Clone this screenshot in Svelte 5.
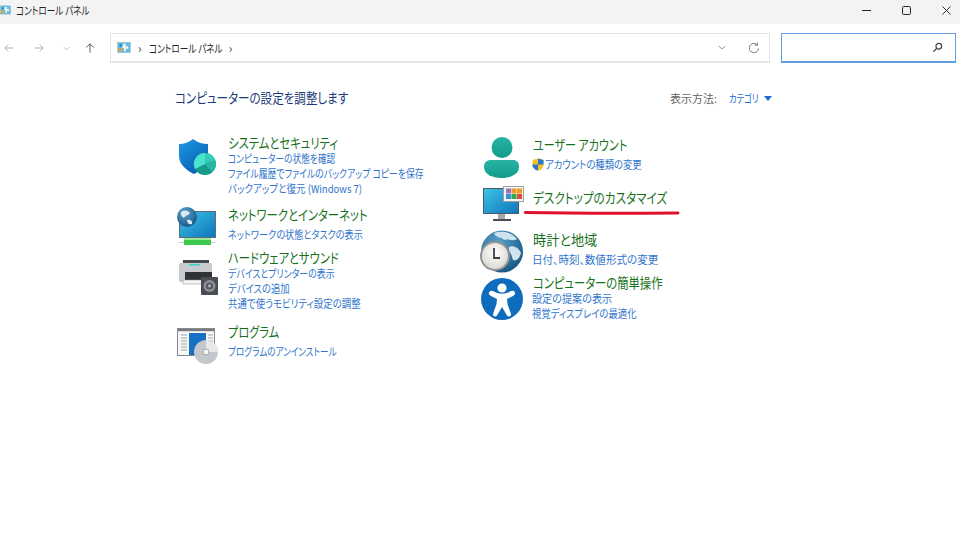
<script>
	// sx squeezes each line to the narrow kana widths of the original UI font
	const leftItems = [
		{
			icon: 'shield',
			iconY: 4,
			after: 11,
			title: 'システムとセキュリティ',
			sx: 0.81,
			links: [
				{ text: 'コンピューターの状態を確認', sx: 0.79 },
				{ text: 'ファイル履歴でファイルのバックアップ コピーを保存', sx: 0.805 },
				{ text: 'バックアップと復元 (Windows 7)', sx: 0.865 }
			]
		},
		{
			icon: 'network',
			iconY: -2,
			after: 8,
			title: 'ネットワークとインターネット',
			sx: 0.81,
			links: [{ text: 'ネットワークの状態とタスクの表示', sx: 0.83 }]
		},
		{
			icon: 'printer',
			iconY: 9,
			after: 13,
			title: 'ハードウェアとサウンド',
			sx: 0.81,
			links: [
				{ text: 'デバイスとプリンターの表示', sx: 0.81 },
				{ text: 'デバイスの追加', sx: 0.85 },
				{ text: '共通で使うモビリティ設定の調整', sx: 0.86 }
			]
		},
		{
			icon: 'program',
			iconY: 2,
			after: 0,
			title: 'プログラム',
			sx: 0.8,
			links: [{ text: 'プログラムのアンインストール', sx: 0.78 }]
		}
	];

	const rightItems = [
		{
			icon: 'user',
			iconY: -2,
			after: 18,
			title: 'ユーザー アカウント',
			sx: 0.79,
			links: [{ text: 'アカウントの種類の変更', sx: 0.85 }],
			uac: true
		},
		{ icon: 'desktop', iconY: -5, after: 26, title: 'デスクトップのカスタマイズ', sx: 0.83, links: [] },
		{
			icon: 'clock',
			iconY: -2,
			after: 8,
			title: '時計と地域',
			sx: 0.94,
			links: [{ text: '日付、時刻、数値形式の変更', sx: 0.96 }]
		},
		{
			icon: 'access',
			iconY: 2,
			after: 0,
			title: 'コンピューターの簡単操作',
			sx: 0.81,
			links: [
				{ text: '設定の提案の表示', sx: 0.92 },
				{ text: '視覚ディスプレイの最適化', sx: 0.85 }
			]
		}
	];
</script>

{#snippet panelIcon()}
	<svg class="small-icon" viewBox="0 0 16 13">
		<rect x="0.5" y="0.5" width="15" height="12" fill="#5cc0ea" stroke="#9aa7b0" stroke-width="0.6" />
		<rect x="2" y="7" width="4" height="4" fill="#f0a030" />
		<path d="M7 2h3v3h3v3h-3v3H8V7H6z" fill="#f5f5e8" />
		<circle cx="4" cy="4" r="1.6" fill="#2a80c8" />
	</svg>
{/snippet}

{#snippet icon(name)}
	<svg class="cat-icon" viewBox="0 0 44 44">
		{#if name === 'shield'}
			<path d="M18 0 C13 4 8 5 4 5 V17 C4 25 11 31 19 35 C27 31 33 25 33 17 V5 C28 5 23 4 18 0Z" fill="url(#shieldFill)" />
			<circle cx="30" cy="25" r="11" fill="#1ca893" />
			<path d="M30 25 V14 A11 11 0 0 1 40 21Z" fill="#30cdb8" />
			<path d="M30 25 L40 21 A11 11 0 0 1 37 33Z" fill="#26b8a4" />
			<path d="M30 25 L37 33 A11 11 0 0 1 20 30Z" fill="#179a86" />
			<path d="M30 25 L20 30 A11 11 0 0 1 30 14Z" fill="#48e2cf" />
		{:else if name === 'network'}
			<rect x="4.5" y="6.5" width="36" height="26" fill="url(#screenFill)" stroke="#5d6d78" stroke-width="1" />
			<rect x="4" y="37" width="5" height="1" fill="#c4c9cc" />
			<rect x="36" y="37" width="4" height="1" fill="#c4c9cc" />
			<rect x="9" y="33" width="27" height="7" fill="#3cc84c" />
			<rect x="9" y="33" width="27" height="2" fill="#98e89a" />
			<circle cx="12" cy="12" r="10" fill="url(#globeFill)" />
			<path d="M6 7 C10 4 13 6 15 8 C13 11 10 10 9 13 C7 12 5 9 6 7Z M12 15 C15 14 18 16 17 19 C14 20 12 18 12 15Z" fill="#dbe9f2" />
		{:else if name === 'printer'}
			<rect x="8" y="1" width="26" height="4" fill="#43484d" />
			<rect x="4" y="4" width="33" height="19" rx="1.5" fill="#c8cbce" />
			<rect x="14" y="5" width="11" height="1.6" fill="#3fd6c4" />
			<rect x="10" y="13" width="27" height="8" fill="#2f3337" />
			<rect x="8" y="21" width="20" height="4" fill="#f4f4f4" stroke="#8a8a8a" stroke-width="0.5" />
			<rect x="26" y="18" width="17" height="18" rx="1" fill="#4a4e52" />
			<circle cx="34.5" cy="27" r="6" fill="#8d9196" />
			<circle cx="34.5" cy="27" r="3.6" fill="#55595e" />
			<circle cx="34.5" cy="27" r="1.4" fill="#b8bcc0" />
		{:else if name === 'program'}
			<rect x="2.5" y="2.5" width="37" height="27" fill="#f7f7f7" stroke="#85898e" stroke-width="1" />
			<rect x="3" y="3" width="36" height="2.2" fill="#777b80" />
			<rect x="14" y="7" width="17" height="22" fill="#1670c4" />
			<path d="M6 9h6M6 12h6M6 15h6M6 18h6M6 21h6M6 24h6M33 9h5M33 12h5M33 15h5" stroke="#a0a5aa" stroke-width="1" />
			<circle cx="31" cy="26" r="12" fill="#c4c8cc" />
			<path d="M31 14 A12 12 0 0 1 43 26 L31 26Z" fill="#e6e8ea" />
			<circle cx="31" cy="26" r="3" fill="#f5f5f5" stroke="#8a8f94" stroke-width="0.7" />
		{:else if name === 'user'}
			<circle cx="22" cy="12.5" r="10.5" fill="url(#tealFill)" />
			<path d="M4 32 C4 27 7 25 11 25 H33 C37 25 39 27 39 32 C39 39 31 43 21.5 43 C12 43 4 39 4 32Z" fill="url(#tealFill)" />
		{:else if name === 'desktop'}
			<rect x="3.5" y="3.5" width="35" height="25" fill="url(#screenFill)" stroke="#4d5a63" stroke-width="1" />
			<rect x="18" y="29" width="7" height="5" fill="#a2a8ad" />
			<rect x="13" y="34" width="18" height="2" fill="#4a4e52" />
			<rect x="23.5" y="1.5" width="20" height="15" fill="#f6f6f6" stroke="#9da1a5" stroke-width="1" />
			<rect x="26" y="3.5" width="5" height="5" fill="#9a72c2" />
			<rect x="31.5" y="3.5" width="5" height="5" fill="#e89a2c" />
			<rect x="37" y="3.5" width="5" height="5" fill="#f09a20" />
			<rect x="26" y="9" width="5" height="5" fill="#3a8ed8" />
			<rect x="31.5" y="9" width="5" height="5" fill="#2ea84c" />
			<rect x="37" y="9" width="5" height="5" fill="#e0483a" />
		{:else if name === 'clock'}
			<circle cx="22" cy="21.5" r="21" fill="url(#globeFill)" />
			<path d="M14 3 C22 0 32 2 37 9 C33 12 28 8 24 10 C22 7 15 8 14 3Z M29 17 C33 15 39 18 41 23 C39 31 33 33 32 27 C31 22 28 21 29 17Z" fill="#cfe3ee" />
			<circle cx="15" cy="26" r="15" fill="#8f9396" />
			<circle cx="15" cy="26" r="13" fill="url(#clockFill)" />
			<path d="M14 18 V28 H20" fill="none" stroke="#3c4044" stroke-width="1.8" />
		{:else if name === 'access'}
			<circle cx="22" cy="22" r="21" fill="#0f6cbd" />
			<circle cx="22" cy="11" r="4.6" fill="#fff" />
			<path d="M9 15.5 C10 13.5 12 13.5 14 14.5 C19 17.5 25 17.5 30 14.5 C32 13.5 34 13.5 35 15.5 C35.6 17.5 34 18.5 33 19 L27 22 L27.5 27 L31 37 C31.6 39 28.2 40.5 27 38.5 L22 30 L17 38.5 C15.8 40.5 12.4 39 13 37 L16.5 27 L17 22 L11 19 C10 18.5 8.4 17.5 9 15.5Z" fill="#fff" />
		{/if}
	</svg>
{/snippet}

{#snippet category(item)}
	<div class="category" style="margin-bottom: {item.after}px">
		<div class="icon-cell" style="padding-top: {Math.max(item.iconY, 0)}px; margin-top: {Math.min(item.iconY, 0)}px">
			{@render icon(item.icon)}
		</div>
		<div class="cat-text">
			<div class="cat-title"><span class="squeeze" style="--sx: {item.sx}">{item.title}</span></div>
			{#each item.links as link}
				<div class="cat-link" class:single={item.links.length === 1}>
					{#if item.uac}
						<svg class="uac" viewBox="0 0 12 13">
							<path d="M6 0.5 L11.5 2 V7 C11.5 10 9 11.5 6 12.8 C3 11.5 0.5 10 0.5 7 V2Z" fill="#f3bd2c" />
							<path d="M6 0.5 L11.5 2 V6.5 H6Z M6 6.5 V12.8 C3 11.5 0.5 10 0.5 7 V6.5Z" fill="#2a78c8" />
						</svg>
					{/if}
					<span class="squeeze" style="--sx: {link.sx}">{link.text}</span>
				</div>
			{/each}
		</div>
	</div>
{/snippet}

<svg class="defs" width="0" height="0">
	<defs>
		<linearGradient id="shieldFill" x1="0" y1="0" x2="0.7" y2="1">
			<stop offset="0" stop-color="#1c9be6" />
			<stop offset="1" stop-color="#0a5cb0" />
		</linearGradient>
		<linearGradient id="screenFill" x1="0" y1="0" x2="1" y2="1">
			<stop offset="0" stop-color="#3cc4e6" />
			<stop offset="1" stop-color="#0f74bc" />
		</linearGradient>
		<radialGradient id="globeFill" cx="0.4" cy="0.3" r="0.8">
			<stop offset="0" stop-color="#5aa4cc" />
			<stop offset="1" stop-color="#104f7c" />
		</radialGradient>
		<linearGradient id="tealFill" x1="0" y1="0" x2="0" y2="1">
			<stop offset="0" stop-color="#27b5a2" />
			<stop offset="1" stop-color="#119b8a" />
		</linearGradient>
		<radialGradient id="clockFill" cx="0.5" cy="0.4" r="0.7">
			<stop offset="0" stop-color="#ffffff" />
			<stop offset="1" stop-color="#d6d3cc" />
		</radialGradient>
	</defs>
</svg>

<div class="window">
	<header class="titlebar">
		<div class="title-left">
			{@render panelIcon()}
			<span class="crumb">コントロール パネル</span>
		</div>
		<div class="window-buttons">
			<svg viewBox="0 0 10 10"><path d="M0 5h10" stroke="#222" stroke-width="1.1" /></svg>
			<svg viewBox="0 0 10 10"><rect x="0.6" y="0.6" width="8.8" height="8.8" rx="1.2" fill="none" stroke="#222" stroke-width="1.1" /></svg>
			<svg viewBox="0 0 10 10"><path d="M0.5 0.5l9 9M9.5 0.5l-9 9" stroke="#222" stroke-width="1" /></svg>
		</div>
	</header>

	<div class="toolbar">
		<div class="nav-buttons">
			<svg viewBox="0 0 12 12"><path d="M11 6H1M5.5 1.5L1 6l4.5 4.5" fill="none" stroke="#aaa" stroke-width="1.1" /></svg>
			<svg viewBox="0 0 12 12"><path d="M1 6h10M6.5 1.5L11 6l-4.5 4.5" fill="none" stroke="#aaa" stroke-width="1.1" /></svg>
			<svg class="nav-chevron" viewBox="0 0 8 5"><path d="M1 1l3 3 3-3" fill="none" stroke="#aaa" stroke-width="0.9" /></svg>
			<svg viewBox="0 0 12 12"><path d="M6 11.5V1M1.5 5.5L6 1l4.5 4.5" fill="none" stroke="#555" stroke-width="1.1" /></svg>
		</div>
		<div class="address">
			{@render panelIcon()}
			<span class="crumb-sep">›</span>
			<span class="crumb">コントロール パネル</span>
			<span class="crumb-sep">›</span>
			<div class="address-end">
				<svg class="addr-chevron" viewBox="0 0 10 6"><path d="M1 1l4 4 4-4" fill="none" stroke="#777" stroke-width="1" /></svg>
				<svg class="refresh" viewBox="0 0 12 12"><path d="M10.5 6.5A4.6 4.6 0 1 1 9 2.6M9.4 0.6V3.2H6.8" fill="none" stroke="#777" stroke-width="1" /></svg>
			</div>
		</div>
		<div class="search">
			<svg viewBox="0 0 12 12"><circle cx="7.4" cy="4.6" r="3.1" fill="none" stroke="#444" stroke-width="1.3" /><path d="M5 7L1.5 10.5" stroke="#444" stroke-width="1.5" /></svg>
		</div>
	</div>

	<main class="content">
		<div class="content-head">
			<h1><span class="squeeze" style="--sx: 0.824">コンピューターの設定を調整します</span></h1>
			<div class="view-by">
				<span class="view-label">表示方法:</span>
				<span class="view-value"><span class="squeeze" style="--sx: 0.75">カテゴリ</span></span>
				<span class="view-arrow"></span>
			</div>
		</div>
		<div class="columns">
			<div class="column left">
				{#each leftItems as item}
					{@render category(item)}
				{/each}
			</div>
			<div class="column right">
				{#each rightItems as item}
					{@render category(item)}
				{/each}
			</div>
		</div>
		<svg class="underline" viewBox="0 0 156 6"><path d="M1.5 2.6 C50 3.4 110 3.4 154 3" fill="none" stroke="#e0112f" stroke-width="3" stroke-linecap="round" /></svg>
	</main>
</div>

<style>
	:global(body) {
		margin: 0;
		background: #fff;
	}

	.defs {
		position: absolute;
	}

	.window {
		width: 960px;
		height: 541px;
		display: flex;
		flex-direction: column;
		overflow: hidden;
		font-family: 'Noto Sans CJK JP', 'Noto Sans', sans-serif;
		font-feature-settings: 'palt';
		color: #222;
		background: #fff;
	}

	.squeeze {
		display: inline-block;
		white-space: pre;
		transform: scaleX(var(--sx));
		transform-origin: left center;
	}

	.titlebar {
		height: 24px;
		background: #f3f3f3;
		display: flex;
		align-items: center;
		justify-content: space-between;
		flex-shrink: 0;
		padding-bottom: 4px;
		box-sizing: border-box;
	}

	.title-left {
		display: flex;
		align-items: center;
		gap: 5px;
		font-size: 11px;
	}

	.crumb {
		display: inline-block;
		width: 73px;
		white-space: pre;
		transform: scaleX(0.78);
		transform-origin: left center;
	}

	.small-icon {
		width: 11px;
		height: 10px;
	}

	.window-buttons {
		display: flex;
		align-items: center;
		gap: 31px;
		padding-right: 9px;
	}

	.window-buttons svg {
		width: 9px;
		height: 9px;
	}

	.toolbar {
		height: 47px;
		display: flex;
		align-items: flex-start;
		padding-top: 9px;
		box-sizing: border-box;
		flex-shrink: 0;
	}

	.nav-buttons {
		width: 110px;
		height: 30px;
		display: flex;
		align-items: center;
		padding-left: 4px;
		gap: 20px;
		box-sizing: border-box;
	}

	.nav-buttons svg {
		width: 10px;
		height: 10px;
	}

	.nav-buttons .nav-chevron {
		width: 7px;
		height: 5px;
		margin: 0 -5px 0 -1px;
	}

	.address {
		width: 660px;
		height: 30px;
		margin-right: 11px;
		box-sizing: border-box;
		border: 1px solid #e5e5e5;
		border-bottom-width: 2px;
		display: flex;
		align-items: center;
		padding-left: 6px;
		gap: 5px;
		font-size: 11px;
	}

	.address .small-icon {
		width: 14px;
		height: 11px;
	}

	.crumb-sep {
		font-size: 12px;
		color: #444;
		margin: 0 2px;
	}

	.address-end {
		margin-left: auto;
		display: flex;
		align-items: center;
		gap: 22px;
		padding-right: 9px;
	}

	.addr-chevron {
		width: 8px;
		height: 5px;
	}

	.refresh {
		width: 12px;
		height: 12px;
	}

	.search {
		width: 175px;
		height: 30px;
		box-sizing: border-box;
		border: 1px solid #5f9ee0;
		border-bottom-width: 2px;
		display: flex;
		align-items: center;
		justify-content: flex-end;
		padding-right: 12px;
	}

	.search svg {
		width: 11px;
		height: 11px;
	}

	.content {
		position: relative;
		flex: 1;
		padding: 16px 188px 0 175px;
	}

	.content-head {
		display: flex;
		align-items: center;
		justify-content: space-between;
		height: 20px;
	}

	h1 {
		margin: 0;
		font-size: 14px;
		font-weight: 400;
		color: #1c3a7a;
	}

	.view-by {
		display: flex;
		align-items: center;
		font-size: 11px;
		color: #666;
		padding-top: 2px;
	}

	.view-value {
		width: 35px;
		margin-left: 12px;
		color: #1a6ad0;
		font-size: 11px;
	}

	.view-arrow {
		border: 4px solid transparent;
		border-top: 5px solid #1a6ad0;
		border-bottom: 0;
	}

	.columns {
		display: flex;
		padding-top: 28px;
	}

	.column {
		display: flex;
		flex-direction: column;
	}

	.left {
		width: 305px;
	}

	.right {
		padding-top: 2px;
	}

	.category {
		display: flex;
		align-items: flex-start;
	}

	.icon-cell {
		width: 53px;
		height: 0;
		flex-shrink: 0;
	}

	.cat-icon {
		display: block;
		width: 44px;
		height: 44px;
	}

	.cat-title {
		font-size: 14px;
		line-height: 16px;
		color: #16701a;
		margin-top: -1px;
		padding-bottom: 1px;
	}

	.cat-link {
		font-size: 11px;
		line-height: 15px;
		color: #2f74cc;
		display: flex;
		align-items: center;
		gap: 1px;
	}

	.right .cat-link {
		margin-left: -1px;
	}

	.cat-link.single {
		margin-top: 4px;
	}

	.uac {
		width: 12px;
		height: 13px;
	}

	.underline {
		position: absolute;
		left: 524px;
		top: 139px;
		width: 156px;
		height: 6px;
	}
</style>
